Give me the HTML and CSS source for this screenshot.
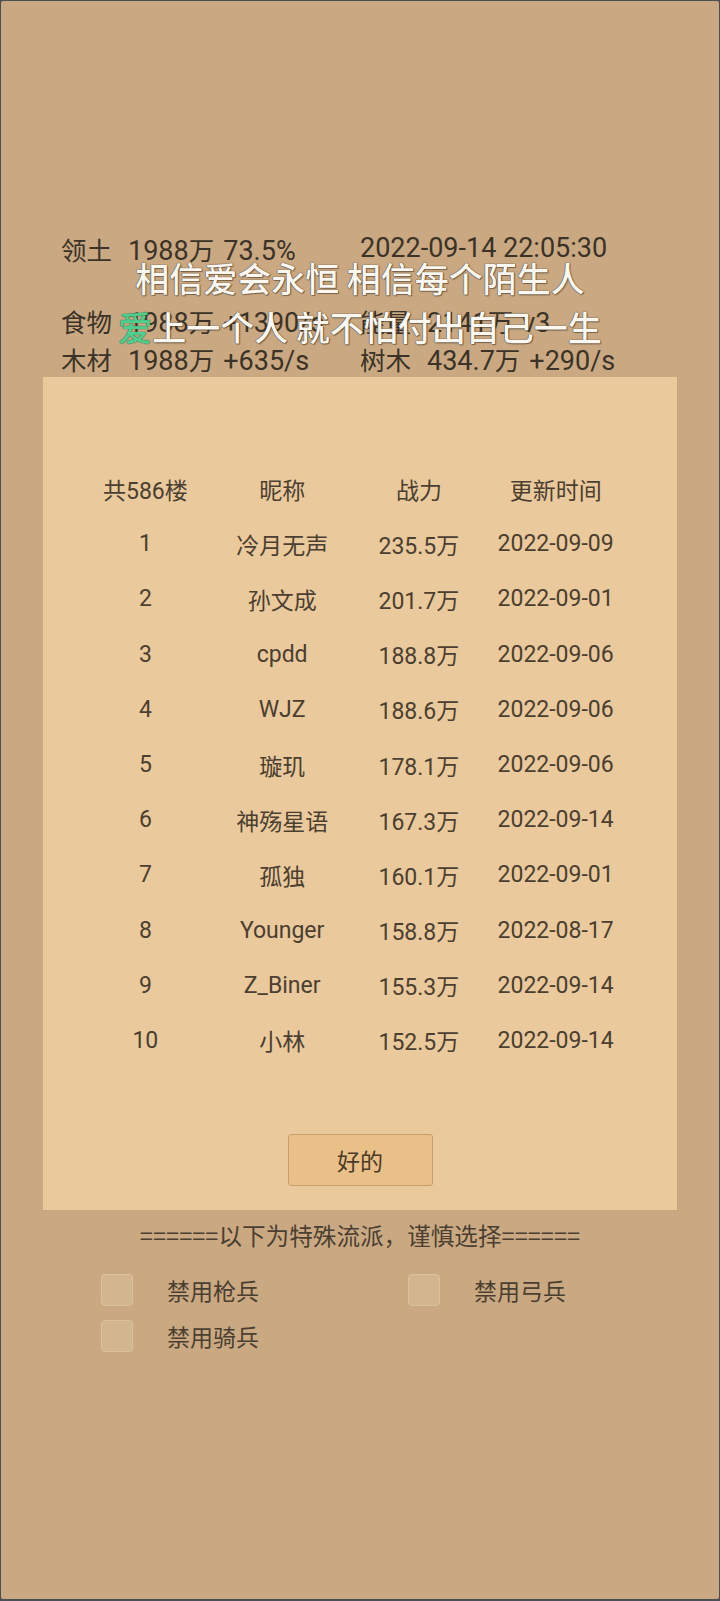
FILE: index.html
```html
<!DOCTYPE html>
<html lang="zh-CN">
<head>
<meta charset="utf-8">
<title>排行榜</title>
<link rel="stylesheet" href="styles.css">
</head>
<body>
<div class="screen">
  <div class="stats">
    <div class="stat-row first">
      <div class="cell"><span class="lbl">领土</span><span class="val">1988<span class="u">万</span></span><span>73.5%</span></div>
      <div class="cell"><span>2022-09-14 22:05:30</span></div>
    </div>
    <div class="stat-row">
      <div class="cell"><span class="lbl">食物</span><span class="val">1988<span class="u">万</span></span><span>+1390/s</span></div>
      <div class="cell"><span class="lbl">能量</span><span class="val">2141<span class="u">万</span></span><span>v3</span></div>
    </div>
    <div class="stat-row">
      <div class="cell"><span class="lbl">木材</span><span class="val">1988<span class="u">万</span></span><span>+635/s</span></div>
      <div class="cell"><span class="lbl">树木</span><span class="val">434.7<span class="u">万</span></span><span>+290/s</span></div>
    </div>
  </div>

  <div class="lyrics">
    <div class="lyric">相信爱会永恒 相信每个陌生人</div>
    <div class="lyric"><span class="sung">爱</span>上一个人 就不怕付出自己一生</div>
  </div>

  <div class="panel">
    <div class="rank">
      <div class="th">共586楼</div><div class="th">昵称</div><div class="th">战力</div><div class="th">更新时间</div>
      <div>1</div><div>冷月无声</div><div>235.5万</div><div>2022-09-09</div>
      <div>2</div><div>孙文成</div><div>201.7万</div><div>2022-09-01</div>
      <div>3</div><div>cpdd</div><div>188.8万</div><div>2022-09-06</div>
      <div>4</div><div>WJZ</div><div>188.6万</div><div>2022-09-06</div>
      <div>5</div><div>璇玑</div><div>178.1万</div><div>2022-09-06</div>
      <div>6</div><div>神殇星语</div><div>167.3万</div><div>2022-09-14</div>
      <div>7</div><div>孤独</div><div>160.1万</div><div>2022-09-01</div>
      <div>8</div><div>Younger</div><div>158.8万</div><div>2022-08-17</div>
      <div>9</div><div>Z_Biner</div><div>155.3万</div><div>2022-09-14</div>
      <div>10</div><div>小林</div><div>152.5万</div><div>2022-09-14</div>
    </div>
    <button class="ok">好的</button>
  </div>

  <div class="notice">======以下为特殊流派，谨慎选择======</div>

  <div class="opts">
    <label class="opt"><span class="box"></span><span class="opt-text">禁用枪兵</span></label>
    <label class="opt"><span class="box"></span><span class="opt-text">禁用弓兵</span></label>
    <label class="opt"><span class="box"></span><span class="opt-text">禁用骑兵</span></label>
  </div>
</div>
</body>
</html>
```

FILE: styles.css
```css
* { box-sizing: border-box; }
html, body {
  margin: 0;
  padding: 0;
  background: #4b4f55;
}
body {
  width: 720px;
  height: 1601px;
  padding: 1px 1px 2px 1px;
  font-family: Roboto, "Noto Sans CJK SC", sans-serif;
  color: #3b3328;
}
.screen {
  position: relative;
  width: 718px;
  height: 1598px;
  background: #caa982;
  border-radius: 2px;
  padding-top: 228px;
  overflow: hidden;
}
.stats {
  padding-left: 60px;
  font-size: 27px;
}
.stat-row {
  display: flex;
  height: 38px;
  align-items: center;
}
.stat-row.first { margin-bottom: 34px; }
.cell {
  display: flex;
  align-items: baseline;
  width: 299px;
  white-space: nowrap;
}
.lbl {
  font-size: 25.5px;
  margin-right: 16px;
}
.u { font-size: 25.5px; }
.val { margin-right: 9px; }

.lyrics {
  position: absolute;
  left: 0;
  right: 0;
  top: 252px;
  text-align: center;
  font-family: "Noto Sans CJK SC", sans-serif;
  font-size: 34px;
  font-weight: 500;
  line-height: 49px;
  color: #fbf8f2;
  text-shadow: 0 0 1px #4e3f2e, 0 0 1px #4e3f2e, 1px 1px 1px rgba(60,45,30,0.5);
  pointer-events: none;
}
.sung { color: #4fcf8e; text-shadow: 0 0 1px #2a6a4a, 0 0 1px #2a6a4a; }

.panel {
  width: 634px;
  margin-left: 42px;
  height: 833px;
  background: #eac99c;
  box-shadow: 1px 1px 0 #c7a67c;
  padding-top: 84px;
  display: flex;
  flex-direction: column;
  align-items: center;
}
.rank {
  align-self: flex-start;
  margin-left: 34px;
  display: grid;
  grid-template-columns: repeat(4, 136.75px);
  grid-auto-rows: 55.2px;
  align-items: center;
  justify-items: center;
  font-size: 23px;
  color: #4a3f31;
}
.th { color: #4a3f31; }
.ok {
  margin-top: 66px;
  width: 145px;
  height: 52px;
  background: #e9c087;
  border: 1px solid #c69f6d;
  border-radius: 3px;
  font-family: "Noto Sans CJK SC", sans-serif;
  font-size: 23px;
  color: #4a3a28;
  padding: 0;
}
.notice {
  text-align: center;
  font-family: "Noto Sans CJK SC", sans-serif;
  font-size: 23.6px;
  height: 52px;
  line-height: 50px;
  color: #4a3f31;
}
.opts {
  display: grid;
  grid-template-columns: 307px 307px;
  grid-auto-rows: 46px;
  padding-left: 100px;
  padding-top: 12px;
}
.opt {
  display: flex;
  align-items: center;
  height: 32px;
}
.box {
  width: 32px;
  height: 32px;
  border-radius: 4px;
  background: #d3b590;
  border: 1px solid #dcc19e;
  margin-right: 34px;
}
.opt-text {
  font-family: "Noto Sans CJK SC", sans-serif;
  font-size: 23px;
  color: #4a3f31;
}
```
